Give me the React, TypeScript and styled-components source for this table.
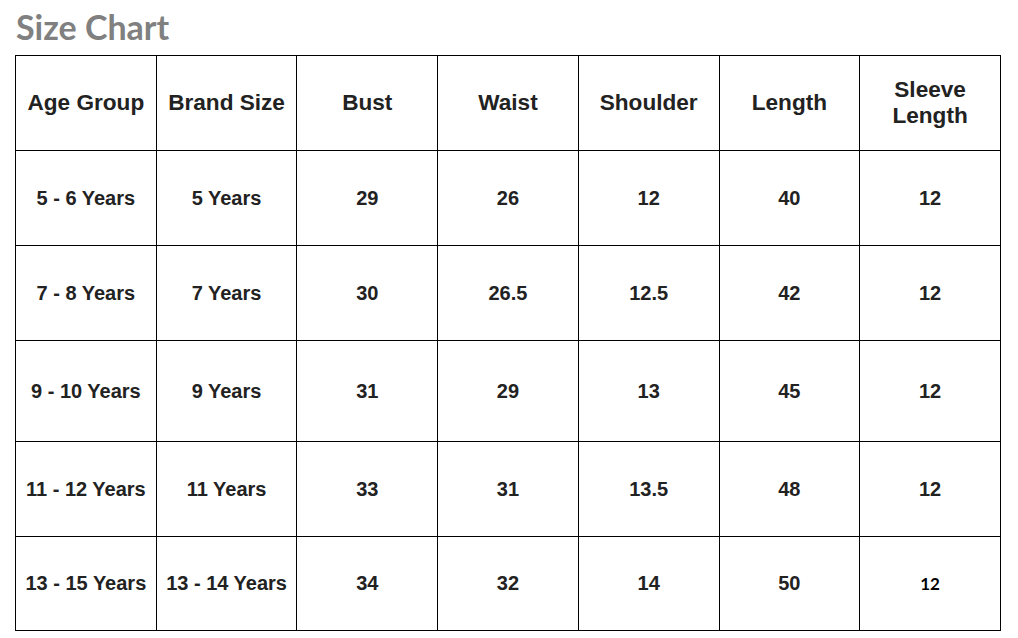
import React from 'react';
import styled, { createGlobalStyle } from 'styled-components';

const GlobalStyle = createGlobalStyle`
    html, body { margin: 0; padding: 0; background: #fff; }
`;

const Page = styled.div`
    padding: 6px 0 0 15px;
    width: 986px;
`;

const Title = styled.h1`
    margin: 0 0 0 1px;
    height: 49px;
    font-family: Lato, "Liberation Sans", sans-serif;
    font-weight: 700;
    font-size: 34px;
    line-height: 42px;
    color: #808080;
`;

const Table = styled.table`
    width: 986px;
    border-collapse: collapse;
    table-layout: fixed;
`;

const HeadCell = styled.th`
    border: 1px solid #000;
    height: 94px;
    padding: 0;
    font-family: "Liberation Sans", Arial, sans-serif;
    font-weight: 700;
    font-size: 22.6px;
    line-height: 26px;
    color: #222;
    text-align: center;
    vertical-align: middle;
`;

const Cell = styled.td<{ $h: number; $alt?: boolean }>`
    border: 1px solid #000;
    height: ${p => p.$h}px;
    padding: 0;
    font-family: ${p => (p.$alt ? 'Lato, "Liberation Sans", sans-serif' : '"Liberation Sans", Arial, sans-serif')};
    font-weight: 700;
    font-size: ${p => (p.$alt ? 17 : 20)}px;
    color: ${p => (p.$alt ? '#000' : '#222')};
    text-align: center;
    vertical-align: middle;
`;

const headers = ['Age Group', 'Brand Size', 'Bust', 'Waist', 'Shoulder', 'Length', 'Sleeve Length'];

const rows = [
    { h: 94, cells: ['5 - 6 Years', '5 Years', '29', '26', '12', '40', '12'] },
    { h: 94, cells: ['7 - 8 Years', '7 Years', '30', '26.5', '12.5', '42', '12'] },
    { h: 100, cells: ['9 - 10 Years', '9 Years', '31', '29', '13', '45', '12'] },
    { h: 94, cells: ['11 - 12 Years', '11 Years', '33', '31', '13.5', '48', '12'] },
    { h: 93, cells: ['13 - 15 Years', '13 - 14 Years', '34', '32', '14', '50', '12'], lastAlt: true },
];

export default function App() {
    return (
        <>
            <GlobalStyle />
            <Page>
                <Title>Size Chart</Title>
                <Table>
                    <thead>
                        <tr>
                            {headers.map(h => (
                                <HeadCell key={h}>{h === 'Sleeve Length' ? <>Sleeve<br />Length</> : h}</HeadCell>
                            ))}
                        </tr>
                    </thead>
                    <tbody>
                        {rows.map((r, i) => (
                            <tr key={i}>
                                {r.cells.map((c, j) => (
                                    <Cell key={j} $h={r.h} $alt={r.lastAlt && j === 6}>{c}</Cell>
                                ))}
                            </tr>
                        ))}
                    </tbody>
                </Table>
            </Page>
        </>
    );
}
